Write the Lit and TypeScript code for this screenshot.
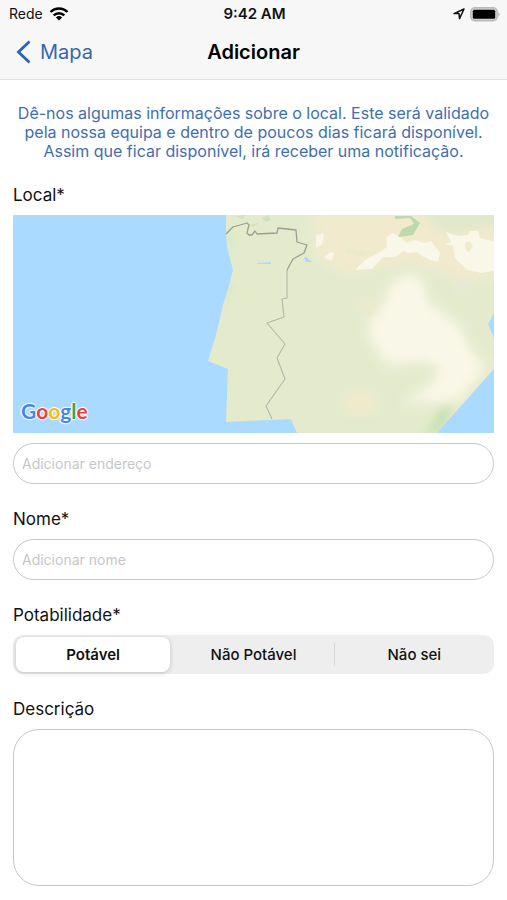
import { LitElement, html, css, svg } from "lit";
import { customElement, state } from "lit/decorators.js";

const plateau = "M377 72 Q385 60 399 59 Q412 60 411 78 Q416 92 429 97 L447 112 L459 138 L474 152 L444 187 L390 188 L417 170 L427 152 L414 146 L374 150 L357 125 L355 106 Q372 92 377 72Z";

@customElement("area-map")
class AreaMap extends LitElement {
  static styles = css`
    :host { display: block; position: relative; }
    .map { display: block; width: 100%; aspect-ratio: 481 / 218; background: #e4ebcd; }
    .logo {
      position: absolute; left: 8px; bottom: 9px;
      font: 700 21px/26px "Lato", sans-serif;
      text-shadow: 1px 0 1px #fff, -1px 0 1px #fff, 0 1px 1px #fff, 0 -1px 1px #fff, 0 0 2px #fff;
    }
    .blue { color: #4285f4; }
    .red { color: #ea4335; }
    .yellow { color: #fbbc05; }
    .green { color: #34a853; }
  `;

  render() {
    return html`
      <svg class="map" viewBox="0 0 481 218" preserveAspectRatio="xMidYMid slice" role="img" aria-label="Mapa de Portugal">
        ${svg`
        <defs>
          <filter id="soft" x="-20%" y="-20%" width="140%" height="140%"><feGaussianBlur stdDeviation="6" /></filter>
          <filter id="haze" x="-30%" y="-30%" width="160%" height="160%"><feGaussianBlur stdDeviation="4" /></filter>
        </defs>
        <rect width="481" height="218" fill="#e4ebcd" />
        <path d="M300 -8 L318 -8 L450 -8 L500 6 L500 62 L455 65 L425 57 L400 48 L372 50 L340 61 L318 52 L302 42Z" fill="#f1eacd" filter="url(#haze)" />
        <path d="M408 -6 H500 V14 L470 12 L445 20 L420 12Z" fill="#e1e9ca" filter="url(#haze)" />
        <path d="M335 33 L360 37 L350 42 L330 38Z" fill="#eaeacb" />
        <path d="${plateau}" fill="#f9f7e7" filter="url(#soft)" />
        <path d="M384 76 L405 72 L412 94 L445 126 L458 151 L440 164 L429 143 L382 137 L371 116Z" fill="#f9f7e7" filter="url(#haze)" />
        <ellipse cx="346" cy="188" rx="17" ry="11" fill="#f1eacb" filter="url(#soft)" />
        <ellipse cx="354" cy="90" rx="10" ry="7" fill="#eeeacb" filter="url(#soft)" />
        <ellipse cx="449" cy="71" rx="6" ry="5" fill="#e9e8da" filter="url(#haze)" />
        <path d="M342 55 L352 45 L367 37 L374 32 L373 23 L379 18 L386 21 L394 28 L402 25 L411 28 L418 26 L427 38 L425 47 L417 45 L409 41 L404 37 L395 38 L390 36 L382 42 L370 42 L359 54Z" fill="#f9f7e7" />
        <path fill-rule="evenodd" d="M432 29 L438 27 L433 17 L445 21 L455 20 L457 16 L465 16 L467 23 L482 27 V55 L469 58 L454 55 L442 43 L440 31Z M452 28 L457 26 L460 31 L456 37 L452 34Z" fill="#f9f7e7" />
        <path d="M303 20 L311 18 L309 30 L303 33Z M311 42 L318 37 L321 38 L319 46Z" fill="#faf6e6" />
        <path d="M382 1 H398 L407 8 L400 20 L385 22 L389 14 L401 9 L397 3 L382 4Z" fill="#bdd9ad" />
        <path d="M222 1 L233 0 L229 4Z M249 3 L255 0 L258 5 L253 7Z M236 10 L246 8 L240 12Z" fill="#cfe2bc" />
        <path d="M212 14 L222 20 L216 42Z M216 66 L222 72 L207 105Z" fill="#d7e8c4" filter="url(#haze)" />
        <path d="M405 218 L417 213 L426 194 L440 190 L430 218Z" fill="#c8e2b2" filter="url(#haze)" />
        <path d="M0 0 H213 V18 L214 32 L220 55 L217 67 L210 90 L203 120 L195 146 L215 154 L213 207 L278 204 L284 218 H0Z" fill="#aadaff" />
        <path d="M481 154 V218 H424Z M481 98 L475 109 L481 123Z" fill="#aadaff" />
        <path d="M244 48 L258 47 L258 49 L244 49Z M291 43 L293 42 L299 47 L293 47Z" fill="#aadaff" />
        <path d="M213 19 L220 12 L234 8 L236 10 L234 18 L236 20 L239 20 L242 16 L244 19 L264 18 L265 13 L283 15 L284 27 L294 30 L291 38 L280 44 L274 55" fill="none" stroke="#9b9f92" stroke-width="1.3" stroke-linejoin="round" />
        <path d="M274 55 V83 L269 84 L271 102 L254 108 L272 129 L264 143 L272 164 L253 191 L259 204" fill="none" stroke="#b3b7a5" stroke-width="1.1" stroke-linejoin="round" />
        `}
      </svg>
      <span class="logo"><span class="blue">G</span><span class="red">o</span><span class="yellow">o</span><span class="blue">g</span><span class="green">l</span><span class="red">e</span></span>
    `;
  }
}

@customElement("app-root")
class AppRoot extends LitElement {
  @state() private choice = 0;
  private options = ["Potável", "Não Potável", "Não sei"];

  static styles = css`
    :host { display: block; min-height: 100vh; background: #fff; color: #111; font-family: "Inter", sans-serif; }
    * { box-sizing: border-box; }
    .top { background: #f7f7f7; border-bottom: 1px solid #e2e2e2; }
    .status, .nav { display: grid; grid-template-columns: 1fr auto 1fr; align-items: center; }
    .status { height: 28px; padding: 0 7px 0 9px; font-size: 14px; line-height: 20px; }
    .network, .power { display: flex; align-items: center; gap: 6px; }
    .power { justify-content: flex-end; gap: 5px; }
    .clock { font-size: 15px; font-weight: 600; }
    .nav { height: 51px; padding: 0 16px 3px; }
    .back { display: flex; align-items: center; gap: 9px; color: #3567b0; font-size: 20px; line-height: 24px; text-decoration: none; }
    .title { margin: 0; font-size: 20px; line-height: 24px; font-weight: 600; color: #000; }
    svg { display: block; flex: none; }
    .form { display: flex; flex-direction: column; padding: 24px 13px 14px; }
    .intro { margin: 0 0 23px; text-align: center; color: #3f6eb0; font-size: 16px; line-height: 19px; }
    .group { display: flex; flex-direction: column; margin: 0 0 24px; padding: 0; border: 0; min-width: 0; }
    .label { display: block; padding: 0; margin-bottom: 9px; font-size: 17px; line-height: 22px; }
    .field { width: 100%; height: 41px; padding: 0 8px; border: 1px solid #c8c8c8; border-radius: 21px; background: #fff; color: #111; font: 14px/20px "Inter", sans-serif; outline: none; }
    .field::placeholder { color: #c6c6c8; opacity: 1; }
    .address { margin-top: 10px; }
    .area { display: block; height: 157px; padding: 12px; border-radius: 26px; resize: none; }
    .segments { display: grid; grid-template-columns: repeat(3, 1fr); height: 39px; padding: 2px 0; border-radius: 10px; background: #eee; }
    .segment { display: flex; align-items: center; position: relative; cursor: pointer; }
    .segment input { position: absolute; inset: 0; margin: 0; opacity: 0; }
    .segment span { flex: 1; display: flex; align-items: center; justify-content: center; height: 35px; margin: 0 3px; border-radius: 8px; font-size: 15px; line-height: 20px; font-weight: 500; }
    .segment input:checked + span { background: #fff; box-shadow: 0 1px 4px rgba(0, 0, 0, 0.2); font-weight: 600; }
    .divided::before { content: ""; width: 1px; height: 23px; background: #d8d8d8; }
  `;

  render() {
    return html`
      <header class="top">
        <div class="status">
          <div class="network">
            <span>Rede</span>
            <svg width="20" height="14" viewBox="0 0 20 14" fill="none" stroke="#000" stroke-width="2.4">
              <path d="M1.5 5 A12.2 12.2 0 0 1 18.5 5" />
              <path d="M4.7 8.4 A7.5 7.5 0 0 1 15.3 8.4" />
              <path d="M10 13.6 L6.9 10.5 A4.5 4.5 0 0 1 13.1 10.5Z" fill="#000" stroke="none" />
            </svg>
          </div>
          <span class="clock">9:42 AM</span>
          <div class="power">
            <svg width="12" height="12" viewBox="0 0 12 12" fill="none" stroke="#111" stroke-width="1.5" stroke-linejoin="round">
              <path d="M11 1 L1 5.6 H6 L6.5 10.6Z" />
            </svg>
            <svg width="30" height="15" viewBox="0 0 30 15">
              <rect x="0.8" y="0.8" width="26.4" height="13" rx="4" fill="#d2d2d2" stroke="#b9b9b9" stroke-width="1.4" />
              <rect x="2.8" y="2.8" width="22.4" height="9" rx="1.5" fill="#000" />
              <path d="M28.3 5 Q31 7.3 28.3 9.6Z" fill="#b5b5b5" />
            </svg>
          </div>
        </div>
        <nav class="nav">
          <a class="back" href="#mapa">
            <svg width="15" height="24" viewBox="0 0 15 24" fill="none" stroke="#2b64b4" stroke-width="2.8">
              <path d="M13.5 1.5 L2.5 12 L13.5 22.5" />
            </svg>
            Mapa
          </a>
          <h1 class="title">Adicionar</h1>
        </nav>
      </header>
      <form class="form">
        <p class="intro">Dê-nos algumas informações sobre o local. Este será validado pela nossa equipa e dentro de poucos dias ficará disponível. Assim que ficar disponível, irá receber uma notificação.</p>
        <div class="group">
          <label class="label" for="local">Local*</label>
          <area-map></area-map>
          <input class="field address" id="local" type="text" placeholder="Adicionar endereço" />
        </div>
        <div class="group">
          <label class="label" for="nome">Nome*</label>
          <input class="field" id="nome" type="text" placeholder="Adicionar nome" />
        </div>
        <fieldset class="group">
          <legend class="label">Potabilidade*</legend>
          <div class="segments">
            ${this.options.map((text, i) => html`
              <label class="segment ${i === 2 && this.choice === 0 ? "divided" : ""}">
                <input type="radio" name="potabilidade" .checked=${this.choice === i} @change=${() => (this.choice = i)} />
                <span>${text}</span>
              </label>`)}
          </div>
        </fieldset>
        <label class="label" for="descricao">Descrição</label>
        <textarea class="field area" id="descricao"></textarea>
      </form>
    `;
  }
}
